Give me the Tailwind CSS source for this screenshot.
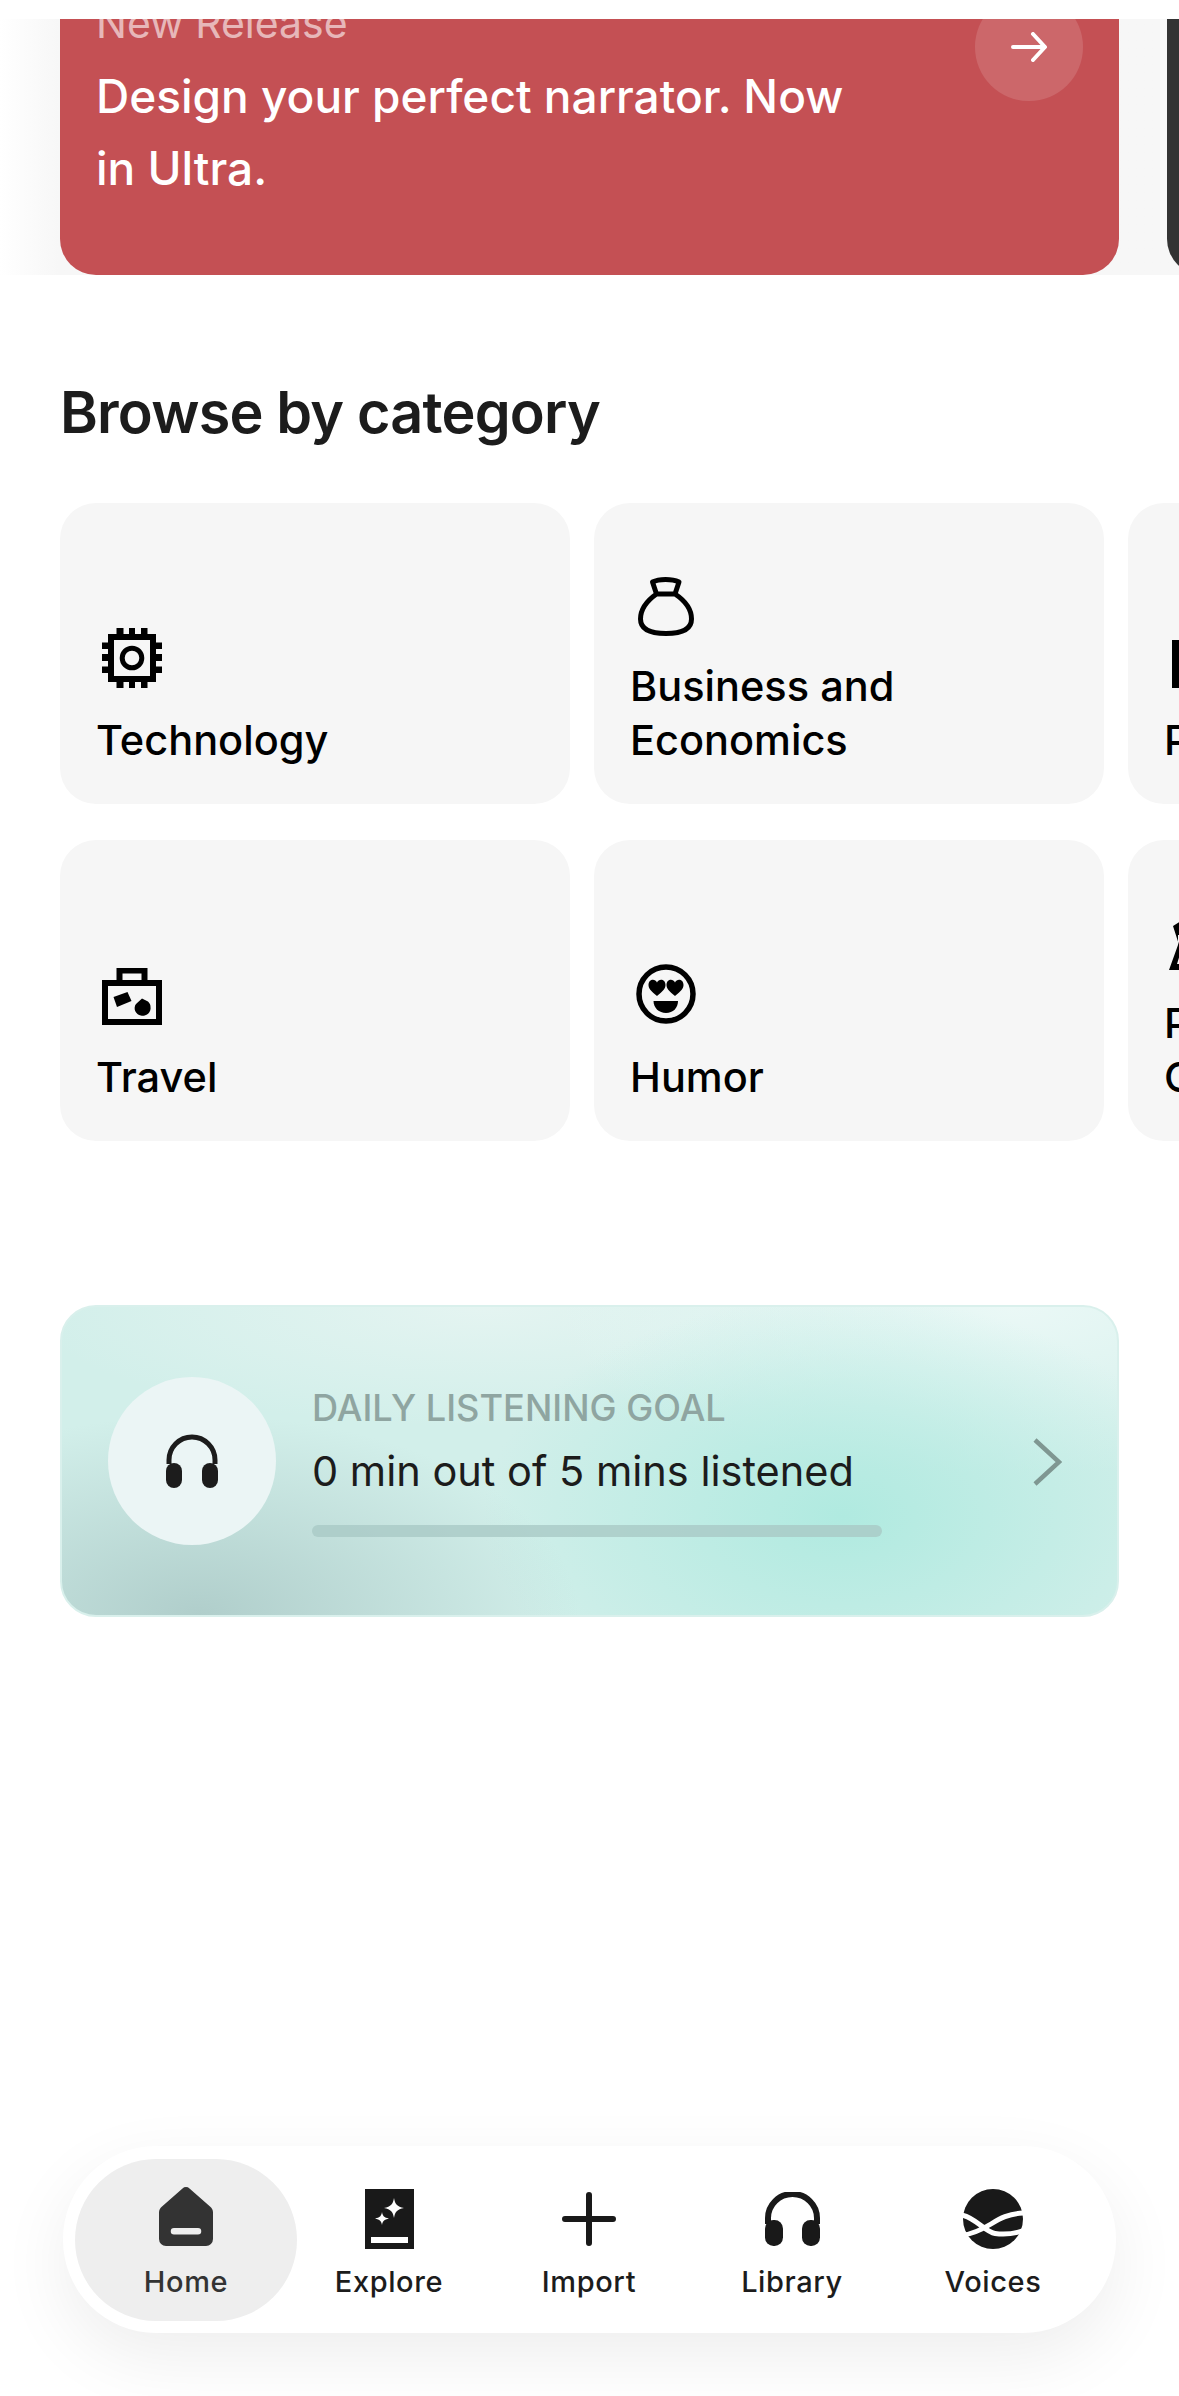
<!doctype html>
<html>
<head>
<meta charset="utf-8">
<script src="https://cdn.jsdelivr.net/npm/@tailwindcss/browser@4"></script>
</head>
<body class="bg-white font-['Inter','Liberation_Sans',sans-serif]">
<div class="relative h-[2396px] w-[1179px] overflow-hidden bg-white">
  <div class="h-[19px]"></div>
  <!-- hero band -->
  <section class="flex h-[256px] gap-[48px] overflow-hidden bg-linear-to-r from-white to-[#f7f7f7] to-[5%] pl-[60px]">
    <article class="relative h-full w-[1059px] shrink-0 overflow-hidden rounded-b-[36px] bg-[#c45054] pl-[36px]">
      <div class="-mt-[19px] text-[41px] leading-[46px] text-white/60">New Release</div>
      <div class="mt-[14px] w-[800px] text-[46px] leading-[72px] font-[450] text-white">Design your perfect narrator. Now<br>in Ultra.</div>
      <div class="absolute top-[-26px] right-[36px] flex h-[108px] w-[108px] items-center justify-center rounded-full bg-white/[0.13]">
        <svg width="36" height="30" viewBox="0 0 36 30" fill="none" stroke="#fff" stroke-width="4" stroke-linecap="round" stroke-linejoin="round"><path d="M2 15H33M22 2l12 13-12 13"/></svg>
      </div>
    </article>
    <div class="h-full w-[200px] shrink-0 rounded-bl-[36px] bg-[#333333]"></div>
  </section>

  <h2 class="mt-[103px] pl-[60px] text-[57.5px] leading-[68px] font-semibold tracking-[-0.8px] text-[#1c1c1c]">Browse by category</h2>

  <!-- category grid -->
  <div class="mt-[57px] grid w-[1700px] grid-cols-[510px_510px_510px] gap-x-[24px] gap-y-[36px] pl-[60px] text-[#000]">
    <div class="flex h-[301px] flex-col justify-end rounded-[36px] bg-[#f6f6f6] px-[36px] pb-[37px]">
      <svg class="mb-[25px] ml-[6px]" width="60" height="60" viewBox="0 0 60 60" fill="#000"><path d="M6 6h48v48H6z M12 12v36h36V12z" fill-rule="evenodd"/><path d="M14.500 0h7v6h-7zM27 0h6v6h-6zM39 0h6.500v6H39zM14.500 54h7v6h-7zM27 54h6v6h-6zM39 54h6.500v6H39zM0 14.500h6v6.500H0zM0 26h6v7H0zM0 38.500h6v6.500H0zM54 14.500h6v6.500h-6zM54 26h6v7h-6zM54 38.500h6v6.500h-6z"/><circle cx="30" cy="30" r="9.800" fill="none" stroke="#000" stroke-width="5"/></svg>
      <div class="text-[41.5px] leading-[54px] font-medium">Technology</div>
    </div>
    <div class="flex h-[301px] flex-col justify-end rounded-[36px] bg-[#f6f6f6] px-[36px] pb-[37px]">
      <svg class="mb-[23px] ml-[8px]" width="56" height="60" viewBox="0 0 56 60" fill="none" stroke="#000" stroke-width="5" stroke-linejoin="round"><path d="M14.500 6C21 2.500 34 2.500 41 6L37 18H18.500zM18.500 18C10 24 2.500 33 2.500 43 2.500 53 12 57.500 28 57.500S53.500 53 53.500 43C53.500 33 46 24 37 18"/></svg>
      <div class="text-[41.5px] leading-[54px] font-medium">Business and<br>Economics</div>
    </div>
    <div class="flex h-[301px] flex-col justify-end rounded-[36px] bg-[#f6f6f6] px-[36px] pb-[37px]">
      <div class="mb-[25px] ml-[8px] h-[48px] w-[40px] border-[8px] border-[#000]"></div>
      <div class="text-[41.5px] leading-[54px] font-medium">Philosophy</div>
    </div>
    <div class="flex h-[301px] flex-col justify-end rounded-[36px] bg-[#f6f6f6] px-[36px] pb-[37px]">
      <svg class="mb-[25px] ml-[6px]" width="60" height="57" viewBox="0 0 60 57" fill="#000"><path fill-rule="evenodd" d="M14.500 0H45.500V12H60V57H0V12H14.500zM20.500 5.500V12H39.500V5.500zM6 18V51H54V18z"/><path d="M11.500 29L25.500 24 29.500 33 15 39z"/><path d="M40 30.500L46 33.500C48 35.500 48.500 37 48.500 39A8 7.500 0 1 1 34 36z"/></svg>
      <div class="text-[41.5px] leading-[54px] font-medium">Travel</div>
    </div>
    <div class="flex h-[301px] flex-col justify-end rounded-[36px] bg-[#f6f6f6] px-[36px] pb-[37px]">
      <svg class="mb-[26px] ml-[6px]" width="60" height="60" viewBox="0 0 60 60"><circle cx="30" cy="30" r="27" fill="none" stroke="#000" stroke-width="5.500"/><path d="M21 32C15 27 12.500 24.500 12.500 21 12.500 15 19 14 21 18.500 23 14 29.500 15 29.500 21 29.500 24.500 27 27 21 32z"/><path d="M39 32C33 27 30.500 24.500 30.500 21 30.500 15 37 14 39 18.500 41 14 47.500 15 47.500 21 47.500 24.500 45 27 39 32z"/><path d="M17.500 37H42C42 44 37 49 30 49S17.500 44 17.500 37z"/></svg>
      <div class="text-[41.5px] leading-[54px] font-medium">Humor</div>
    </div>
    <div class="flex h-[301px] flex-col justify-end rounded-[36px] bg-[#f6f6f6] px-[36px] pb-[37px]">
      <svg class="mb-[26px] ml-[5px]" width="60" height="49" viewBox="0 0 60 49" fill="#000"><path d="M4 5L12 0V14H9V24L0 49H16V43H8L12 30z"/></svg>
      <div class="text-[41.5px] leading-[54px] font-medium">Politics and<br>Culture</div>
    </div>
  </div>

  <!-- listening goal -->
  <section class="relative mt-[164px] ml-[60px] flex h-[312px] w-[1059px] items-center overflow-hidden rounded-[36px] border-2 border-[#d9f0ec] bg-[#d2efea] bg-[radial-gradient(ellipse_380px_200px_at_13%_100%,#b0cecb_0%,rgba(176,206,203,0)_100%),radial-gradient(ellipse_360px_220px_at_74%_68%,#b0eae0_0%,rgba(176,234,224,0)_100%),radial-gradient(ellipse_460px_170px_at_90%_0%,#eaf8f6_0%,rgba(234,248,246,0)_100%),radial-gradient(ellipse_460px_120px_at_40%_0%,#e4f4f1_0%,rgba(228,244,241,0)_100%)] pl-[46px]">
    <div class="flex h-[168px] w-[168px] shrink-0 items-center justify-center rounded-full bg-[#ebf5f5]">
      <svg width="56" height="54" viewBox="0 0 56 54" fill="none"><path d="M5 30V26a23 23 0 0 1 46 0v4" stroke="#1c1c1c" stroke-width="5"/><rect x="2" y="29" width="16" height="25" rx="8" fill="#1c1c1c"/><rect x="38" y="29" width="16" height="25" rx="8" fill="#1c1c1c"/></svg>
    </div>
    <div class="ml-[36px] flex w-[570px] flex-col">
      <div class="text-[36.2px] leading-[44px] font-medium text-[#8fa5a1]">DAILY LISTENING GOAL</div>
      <div class="mt-[16px] text-[41.5px] leading-[50px] text-[#1c1c1c]">0 min out of 5 mins listened</div>
      <div class="mt-[29px] h-[12px] rounded-full bg-[#a9c9c5]/80"></div>
    </div>
    <svg class="absolute top-[131px] right-[55px]" width="30" height="48" viewBox="0 0 30 48" fill="none" stroke="#7f9792" stroke-width="4.500"><path d="M3 2l24 22L3 46"/></svg>
  </section>

  <!-- bottom nav -->
  <nav class="absolute top-[2146px] left-[63px] flex h-[187px] w-[1053px] items-center rounded-[93px] bg-white pl-[12px] text-[29px] leading-[36px] font-medium tracking-[0.6px] text-[#1c1c1c] shadow-[0_24px_70px_rgba(0,0,0,0.07)]">
    <a class="flex h-[162px] w-[222px] shrink-0 flex-col items-center rounded-[81px] bg-[#eeeeee] pt-[28px] text-[#333333]">
      <svg width="54" height="59" viewBox="0 0 54 59" fill="#333333"><path fill-rule="evenodd" d="M23.500 1.500a5 5 0 0 1 7 0L51 19.500c2 1.800 3 3.500 3 6V52a7 7 0 0 1-7 7H7a7 7 0 0 1-7-7V25.500c0-2.500 1-4.200 3-6zM15 41a3 3 0 0 0 0 6.500h24a3 3 0 0 0 0-6.500z"/></svg>
      <span class="mt-[18px]">Home</span>
    </a>
    <a class="flex h-[162px] w-[184px] shrink-0 flex-col items-center pt-[30px]">
      <svg width="49" height="60" viewBox="0 0 49 60" fill="#191919"><path fill-rule="evenodd" d="M0 0H49V60H0zM6 48v6H43V48z"/><path fill="#fff" d="M29 9c1 6 3 8.500 10 10-7 1.500-9 4-10 10-1-6-3-8.500-10-10 7-1.500 9-4 10-10zM17 23c.7 4 2 5.500 7 6.500-5 1-6.300 2.500-7 6.500-.7-4-2-5.500-7-6.500 5-1 6.300-2.500 7-6.500z"/></svg>
      <span class="mt-[15px]">Explore</span>
    </a>
    <a class="flex h-[162px] w-[216px] shrink-0 flex-col items-center pt-[33px]">
      <svg width="54" height="54" viewBox="0 0 54 54" fill="none" stroke="#191919" stroke-width="6" stroke-linecap="round"><path d="M27 3V51M3 27H51"/></svg>
      <span class="mt-[18px]">Import</span>
    </a>
    <a class="flex h-[162px] w-[190px] shrink-0 flex-col items-center pt-[33px]">
      <svg width="55" height="54" viewBox="0 0 55 54" fill="none"><path d="M3 32V26a24.500 24 0 0 1 49 0v6" stroke="#191919" stroke-width="6"/><rect x="0" y="28" width="18" height="26" rx="8.500" fill="#191919"/><rect x="37" y="28" width="18" height="26" rx="8.500" fill="#191919"/></svg>
      <span class="mt-[18px]">Library</span>
    </a>
    <a class="flex h-[162px] w-[212px] shrink-0 flex-col items-center pt-[30px]">
      <svg width="60" height="60" viewBox="0 0 60 60"><circle cx="30" cy="30" r="30" fill="#191919"/><path d="M-2 26C12 28 22 43 32 44.500 42 46 54 44 62 41M62 24C46 24 36 30 28 35 18 41 8 46 -2 46" fill="none" stroke="#fff" stroke-width="5"/></svg>
      <span class="mt-[15px]">Voices</span>
    </a>
  </nav>
</div>
</body>
</html>
